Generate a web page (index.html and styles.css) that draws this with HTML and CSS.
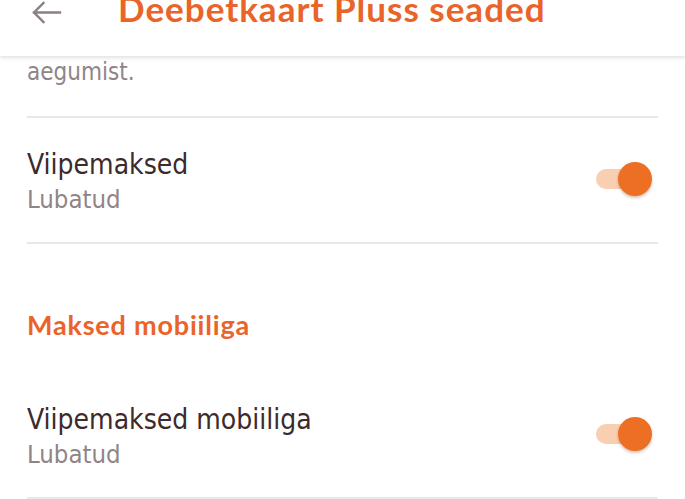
FILE: index.html
```html
<!DOCTYPE html>
<html lang="et">
<head>
<meta charset="utf-8">
<title>Deebetkaart Pluss seaded</title>
<link rel="stylesheet" href="styles.css">
</head>
<body>
<header class="appbar">
  <div class="toolbar">
    <svg class="back" width="32" height="24" viewBox="0 0 32 24" aria-hidden="true">
      <path d="M3 11.5 H29 M12.5 2 L3 11.5 L12.5 21" fill="none" stroke="#8c8081" stroke-width="2.4" stroke-linecap="square" stroke-linejoin="miter"/>
    </svg>
    <h1 class="title">Deebetkaart Pluss seaded</h1>
  </div>
</header>
<main class="content">
  <p class="desc">aegumist.</p>
  <div class="divider"></div>
  <div class="row">
    <div class="texts">
      <div class="row-title">Viipemaksed</div>
      <div class="row-sub">Lubatud</div>
    </div>
    <div class="switch"><span class="track"></span><span class="knob"></span></div>
  </div>
  <div class="divider"></div>
  <h2 class="section">Maksed mobiiliga</h2>
  <div class="row">
    <div class="texts">
      <div class="row-title">Viipemaksed mobiiliga</div>
      <div class="row-sub">Lubatud</div>
    </div>
    <div class="switch"><span class="track"></span><span class="knob"></span></div>
  </div>
  <div class="divider"></div>
</main>
</body>
</html>
```
FILE: styles.css
```css
html, body {
  margin: 0;
  padding: 0;
  background: #ffffff;
}
body {
  width: 685px;
  height: 499px;
  overflow: hidden;
  font-family: "Liberation Sans Narrow", "DejaVu Sans Condensed", "Liberation Sans", sans-serif;
}
.appbar {
  position: relative;
  z-index: 2;
  height: 56px;
  overflow: hidden;
  background: #ffffff;
  box-shadow: 0 2px 4px rgba(0, 0, 0, 0.12);
}
.toolbar {
  display: flex;
  align-items: flex-start;
  margin-top: -12px;
  height: 56px;
}
.back {
  margin-left: 31px;
  margin-top: 13px;
  flex: none;
}
.title {
  margin: 0 0 0 55px;
  font-family: Lato, "Open Sans", sans-serif;
  font-weight: 700;
  font-size: 35px;
  letter-spacing: 1px;
  line-height: 40px;
  color: #ea6429;
  white-space: nowrap;
}
.content {
  padding: 1px 27px 0 27px;
}
.desc {
  margin: 0;
  padding-bottom: 29px;
  font-size: 24px;
  line-height: 30px;
  color: #8f8586;
}
.divider {
  height: 2px;
  background: #e8e8e8;
}
.row {
  display: flex;
  align-items: center;
  justify-content: space-between;
  padding: 29px 0 27px 0;
}
.row-title {
  font-size: 28px;
  line-height: 36px;
  color: #3d2a2b;
}
.row-sub {
  font-size: 25.5px;
  line-height: 32px;
  color: #8f8586;
}
.section {
  margin: 0;
  padding: 66px 0 33px 0;
  font-family: Lato, "Open Sans", sans-serif;
  font-weight: 700;
  font-size: 27px;
  letter-spacing: 0.8px;
  line-height: 30px;
  color: #ea6429;
}
.switch {
  position: relative;
  width: 56px;
  height: 34px;
  margin-right: 6px;
  margin-top: -4px;
}
.track {
  position: absolute;
  left: 0;
  top: 7px;
  width: 44px;
  height: 20px;
  border-radius: 10px;
  background: #f9cfb2;
}
.knob {
  position: absolute;
  right: 0;
  top: 0;
  width: 34px;
  height: 34px;
  border-radius: 50%;
  background: #ec6f24;
  box-shadow: 0 2px 3px rgba(120, 60, 20, 0.3);
}
```
